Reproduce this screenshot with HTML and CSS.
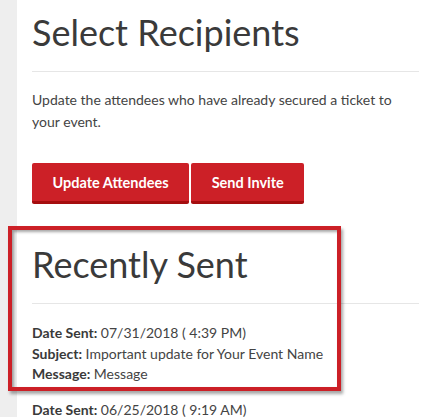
FILE: index.html
```html
<!DOCTYPE html>
<html>
<head>
<meta charset="utf-8">
<link rel="stylesheet" href="styles.css">
</head>
<body>
<div class="page">
  <aside class="rail"></aside>
  <main class="content">
    <h1 class="title">Select Recipients</h1>
    <hr class="rule">
    <p class="intro">Update the attendees who have already secured a ticket to your event.</p>
    <div class="actions">
      <button class="btn">Update Attendees</button>
      <button class="btn">Send Invite</button>
    </div>
    <h1 class="title title-recent">Recently Sent</h1>
    <hr class="rule">
    <div class="entry">
      <div><b>Date Sent:</b> 07/31/2018 ( 4:39 PM)</div>
      <div><b>Subject:</b> Important update for Your Event Name</div>
      <div><b>Message:</b> Message</div>
    </div>
    <div class="entry">
      <div><b>Date Sent:</b> 06/25/2018 ( 9:19 AM)</div>
      <div><b>Subject:</b> Important update for Your Event Name</div>
      <div><b>Message:</b> Message</div>
    </div>
  </main>
  <div class="highlight"></div>
</div>
</body>
</html>
```

FILE: styles.css
```css
html, body {
  margin: 0;
  padding: 0;
  background: #fff;
  overflow: hidden;
}
.page {
  position: relative;
  display: flex;
  height: 417px;
  overflow: hidden;
  font-family: Lato, "Open Sans", sans-serif;
  color: #444;
}
.rail {
  width: 17px;
  flex: none;
  background: #eeeeee;
}
.content {
  flex: 1;
  padding: 0 8px 0 15px;
}
.title {
  margin: 10px 0 0;
  font-size: 36px;
  font-weight: 400;
  line-height: 44px;
  color: #3a3a3a;
}
.title-recent {
  margin-top: 38px;
}
.rule {
  border: 0;
  border-top: 1px solid #e6e6e6;
  margin: 17px 0 0;
}
.intro {
  margin: 17px 0 0;
  font-size: 14px;
  line-height: 22px;
  color: #444;
  max-width: 370px;
}
.actions {
  display: flex;
  gap: 2px;
  margin-top: 30px;
}
.btn {
  font-family: Lato, sans-serif;
  font-weight: 700;
  font-size: 14.5px;
  color: #fff;
  background: #cc2027;
  border: 0;
  border-bottom: 3px solid #a50d0f;
  border-radius: 2px;
  height: 41px;
  padding: 0 20.5px;
}
.entry {
  margin-top: 15px;
  font-size: 14px;
  line-height: 20.5px;
  color: #444;
}
.rule + .entry {
  margin-top: 19px;
}
.entry b {
  font-weight: 700;
  color: #3a3a3a;
}
.highlight {
  position: absolute;
  left: 8px;
  top: 226px;
  width: 325px;
  height: 157px;
  border: 4px solid #cc2027;
  box-shadow: 2px 3px 3px rgba(0,0,0,0.35), inset 2px 2px 3px rgba(0,0,0,0.35);
  pointer-events: none;
}
```
